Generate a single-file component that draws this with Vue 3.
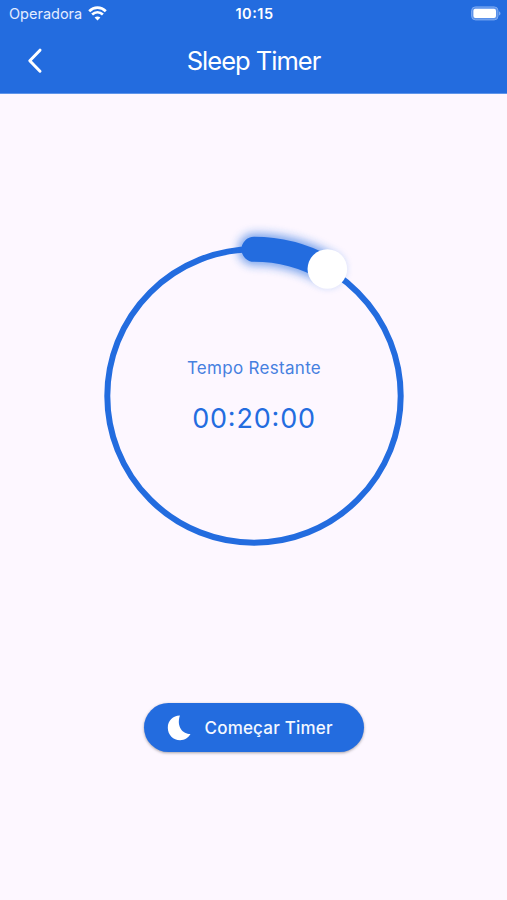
<template>
  <div class="screen">
    <header class="header">
      <div class="status-bar">
        <div class="carrier">
          <span>Operadora</span>
          <svg class="wifi" viewBox="0 0 19 15">
            <path d="M1.2 5.2C6 .5 13 .5 17.8 5.2" />
            <path d="M4.1 8.6c3.2-2.9 7.6-2.9 10.8 0" />
            <path class="dot" d="M9.5 14.4 6.6 11.5c1.7-1.5 4.1-1.5 5.8 0z" />
          </svg>
        </div>
        <span class="clock">10<span class="colon">:</span>15</span>
        <svg class="battery" viewBox="0 0 30 15">
          <rect class="shell" x=".6" y=".9" width="26.4" height="13" rx="3.8" />
          <rect class="level" x="2.4" y="2.8" width="22.6" height="9.2" rx="2" />
          <path class="tip" d="M28 5.2c2 .8 2 3.6 0 4.4z" />
        </svg>
      </div>
      <nav class="nav-bar">
        <svg class="back" viewBox="0 0 16 26">
          <path d="M13 2.2 2.8 12.7 13 23.2" />
        </svg>
        <h1 class="title">Sleep Timer</h1>
      </nav>
    </header>

    <main class="content">
      <div class="dial">
        <svg class="ring" viewBox="0 0 340 340">
          <defs>
            <filter id="glow" filterUnits="userSpaceOnUse" x="-30" y="-30" width="400" height="400">
              <feGaussianBlur stdDeviation="5" />
            </filter>
          </defs>
          <circle class="track" :cx="center" :cy="center" :r="radius" />
          <path class="glow" :d="arc" filter="url(#glow)" />
          <path class="progress" :d="arc" />
          <circle class="knob" :cx="knob.x" :cy="knob.y" r="19.8" />
        </svg>
        <div class="remaining">
          <span class="label">Tempo Restante</span>
          <span class="time">
            <template v-for="(part, index) in time" :key="index"><span v-if="index" class="colon">:</span>{{ part }}</template>
          </span>
        </div>
      </div>

      <button class="start-btn">
        <svg class="moon" viewBox="0 0 24 26">
          <path d="M12.9.6C6.2.5.8 5.8.8 12.7.8 19.7 6.3 25.2 13.1 25.2c4.5 0 8.4-2.3 10.4-6.1C15.8 19.1 9.2 12 12.9.6z" />
        </svg>
        <span>Começar Timer</span>
      </button>
    </main>
  </div>
</template>

<script setup>
import { ref, computed } from 'vue';

const center = 170;
const radius = 146.7;
const seconds = ref(20 * 60);
const maxSeconds = 4 * 60 * 60;

const pad = (n) => String(n).padStart(2, '0');
// [hours, minutes, seconds]
const time = computed(() => {
  const s = seconds.value;
  return [pad(Math.floor(s / 3600)), pad(Math.floor((s % 3600) / 60)), pad(s % 60)];
});

const knob = computed(() => {
  const angle = (seconds.value / maxSeconds) * Math.PI * 2;
  return {
    x: center + radius * Math.sin(angle),
    y: center - radius * Math.cos(angle),
  };
});

const arc = computed(() => {
  const large = seconds.value > maxSeconds / 2 ? 1 : 0;
  return `M${center} ${center - radius} A${radius} ${radius} 0 ${large} 1 ${knob.value.x} ${knob.value.y}`;
});
</script>

<style>
body {
  background-color: #fdf7ff;
}
</style>

<style scoped>
.screen {
  height: 900px;
  display: flex;
  flex-direction: column;
  background-color: #fdf7ff;
  color: #236cdf;
  font-family: Inter, 'Liberation Sans', sans-serif;
  overflow: hidden;
}

.header {
  height: 93px;
  flex: none;
  background-color: #236cdf;
  border-bottom: 1px solid #5f95ea;
  color: #fff;
}

.status-bar {
  height: 27px;
  display: grid;
  grid-template-columns: 1fr auto 1fr;
  align-items: center;
  padding: 0 6px 0 9px;
  font-size: 14.5px;
}

.carrier {
  display: flex;
  align-items: center;
  gap: 6px;
  color: #e3edff;
}

.wifi {
  width: 19px;
  height: 15px;
  fill: none;
  stroke: #fff;
  stroke-width: 2.7;
}
.wifi .dot {
  fill: #fff;
  stroke: none;
}

.clock {
  margin-right: 1px;
  font-weight: 600;
  letter-spacing: 0.5px;
}

.colon {
  vertical-align: 0.09em;
  line-height: 1;
}

.battery {
  width: 30px;
  height: 15px;
  justify-self: end;
}
.shell {
  fill: #5a91ea;
  stroke: #7daaf1;
  stroke-width: 1;
}
.level {
  fill: #fff;
}
.tip {
  fill: #7daaf1;
}

.nav-bar {
  height: 67px;
  display: grid;
  grid-template-columns: 70px 1fr 70px;
  align-items: center;
}

.back {
  width: 16px;
  height: 26px;
  margin-left: 27px;
  fill: none;
  stroke: #fff;
  stroke-width: 3;
  stroke-linecap: round;
  stroke-linejoin: round;
}

.title {
  margin: 0;
  text-align: center;
  font-size: 25.5px;
  font-weight: 400;
  line-height: 33px;
  letter-spacing: -1px;
}

.content {
  flex: 1;
  display: flex;
  flex-direction: column;
  align-items: center;
  padding-top: 132px;
}

.dial {
  width: 340px;
  height: 340px;
  display: grid;
  place-items: center;
}
.dial > * {
  grid-area: 1 / 1;
}

.ring {
  width: 340px;
  height: 340px;
  overflow: visible;
}
.track,
.progress,
.glow {
  fill: none;
  stroke: #236cdf;
}
.track {
  stroke-width: 6;
}
.progress {
  stroke-width: 25;
  stroke-linecap: round;
}
.glow {
  stroke-width: 32;
  stroke-linecap: round;
  opacity: 0.6;
}
.knob {
  fill: #fff;
}

.remaining {
  display: flex;
  flex-direction: column;
  align-items: center;
  gap: 23px;
  padding: 1px 0 0 1px;
}

.label {
  font-size: 17px;
  line-height: 22px;
  letter-spacing: 0.3px;
  color: #4680df;
}

.time {
  font-size: 27px;
  line-height: 34px;
  letter-spacing: 0.8px;
}

.start-btn {
  width: 220px;
  height: 49px;
  margin-top: 137px;
  padding: 0 0 0 23px;
  display: flex;
  align-items: center;
  gap: 14px;
  border: none;
  border-radius: 25px;
  background-color: #236cdf;
  box-shadow: 0 1px 3px rgba(0, 0, 0, 0.35);
  color: #f4f8ff;
  font-family: inherit;
  font-size: 17px;
  font-weight: 500;
  letter-spacing: 0.2px;
}

.moon {
  width: 24px;
  height: 26px;
  fill: #fff;
}
</style>
